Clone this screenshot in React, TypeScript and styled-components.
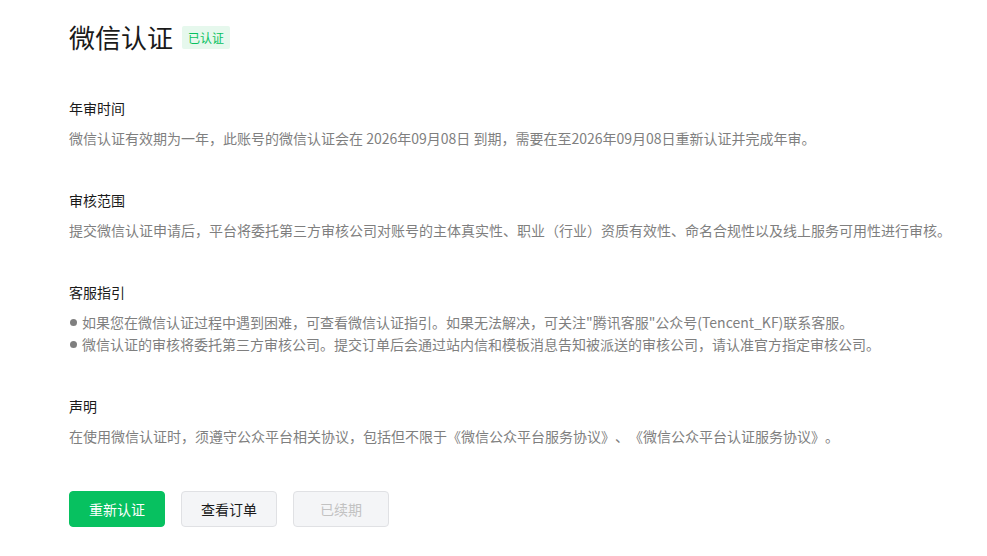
import styled, { createGlobalStyle } from "styled-components";

const GlobalStyle = createGlobalStyle`
  html, body {
    margin: 0;
    padding: 0;
    background: #fff;
  }
  body {
    font-family: "Noto Sans CJK SC", "Noto Sans", sans-serif;
    -webkit-font-smoothing: antialiased;
    text-spacing-trim: space-all;
  }
`;

const sections = [
  {
    title: "年审时间",
    lines: [
      "微信认证有效期为一年，此账号的微信认证会在 2026年09月08日 到期，需要在至2026年09月08日重新认证并完成年审。",
    ],
  },
  {
    title: "审核范围",
    lines: [
      "提交微信认证申请后，平台将委托第三方审核公司对账号的主体真实性、职业（行业）资质有效性、命名合规性以及线上服务可用性进行审核。",
    ],
  },
  {
    title: "客服指引",
    bullets: true,
    lines: [
      "如果您在微信认证过程中遇到困难，可查看微信认证指引。如果无法解决，可关注\"腾讯客服\"公众号(Tencent_KF)联系客服。",
      "微信认证的审核将委托第三方审核公司。提交订单后会通过站内信和模板消息告知被派送的审核公司，请认准官方指定审核公司。",
    ],
  },
  {
    title: "声明",
    lines: [
      "在使用微信认证时，须遵守公众平台相关协议，包括但不限于《微信公众平台服务协议》、《微信公众平台认证服务协议》。",
    ],
  },
];

const App = () => {
  return (
    <Page>
      <GlobalStyle />
      <Header>
        <Title>微信认证</Title>
        <Badge>已认证</Badge>
      </Header>
      {sections.map((s) => (
        <Section key={s.title}>
          <SectionTitle>{s.title}</SectionTitle>
          {s.lines.map((line) =>
            s.bullets ? (
              <BulletLine key={line}>
                <Dot />
                {line}
              </BulletLine>
            ) : (
              <Text key={line}>{line}</Text>
            )
          )}
        </Section>
      ))}
      <Actions>
        <Button variant="primary">重新认证</Button>
        <Button>查看订单</Button>
        <Button variant="disabled" disabled>
          已续期
        </Button>
      </Actions>
    </Page>
  );
};

export default App;

const Page = styled.div`
  padding: 17px 0 0 69px;
  width: 918px;
`;
const Header = styled.div`
  display: flex;
  align-items: center;
  height: 40px;
  gap: 9px;
`;
const Title = styled.h1`
  margin: 0;
  font-size: 26px;
  font-weight: 400;
  line-height: 40px;
  color: #1a1a1a;
`;
const Badge = styled.span`
  display: inline-flex;
  align-items: center;
  height: 23px;
  padding: 0 6px;
  border-radius: 2px;
  background: #e6f8ed;
  color: #07c160;
  font-size: 12px;
  margin-top: 1px;
`;
const Section = styled.div`
  margin-top: 40px;
`;
const SectionTitle = styled.h4`
  margin: 0 0 8px;
  font-size: 14px;
  font-weight: 400;
  line-height: 22px;
  color: #1a1a1a;
`;
const Text = styled.p`
  margin: 0;
  font-size: 14px;
  line-height: 22px;
  color: #7f7f7f;
  white-space: nowrap;
`;
const BulletLine = styled(Text)`
  display: flex;
  align-items: center;
`;
const Dot = styled.span`
  display: inline-block;
  width: 7px;
  height: 7px;
  border-radius: 50%;
  background: #7f7f7f;
  margin: 0 5px 0 1px;
`;
const Actions = styled.div`
  display: flex;
  gap: 16px;
  margin-top: 44px;
`;
const Button = styled.button<{ variant?: "primary" | "disabled" }>`
  width: 96px;
  height: 36px;
  box-sizing: border-box;
  border-radius: 4px;
  font-family: inherit;
  font-size: 14px;
  cursor: pointer;
  border: 1px solid
    ${(p) => (p.variant === "primary" ? "#07c160" : "#e0e1e4")};
  background: ${(p) => (p.variant === "primary" ? "#07c160" : "#f4f5f7")};
  color: ${(p) =>
    p.variant === "primary"
      ? "#fff"
      : p.variant === "disabled"
      ? "#c2c2c2"
      : "#1a1a1a"};
  &:disabled {
    cursor: not-allowed;
  }
`;
